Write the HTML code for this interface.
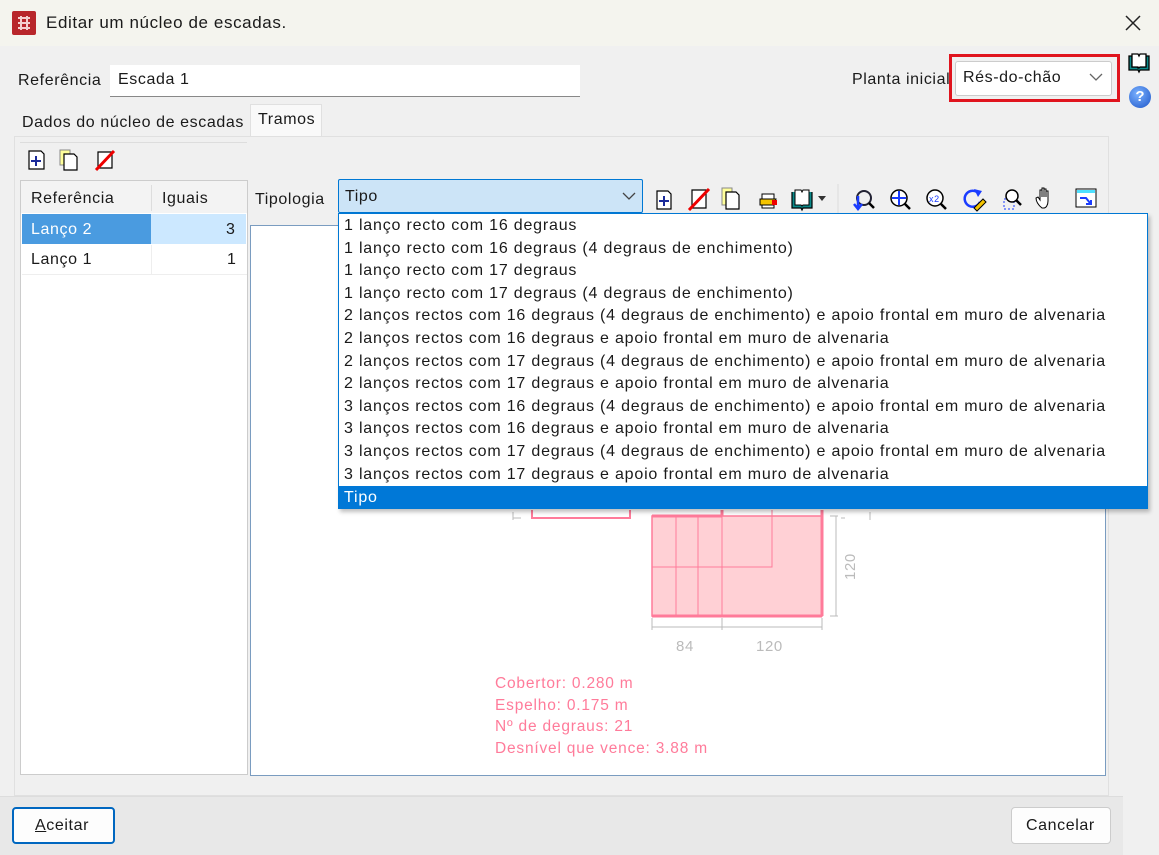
<!DOCTYPE html>
<html><head><meta charset="utf-8"><style>
*{margin:0;padding:0;box-sizing:border-box}
body{width:1159px;height:855px;overflow:hidden;background:#f0f0f0;font-family:"Liberation Sans",sans-serif;font-size:16px;color:#1a1a1a;position:relative;letter-spacing:0.6px}
.a{position:absolute;white-space:nowrap}
.li{position:absolute;left:5px;white-space:nowrap;font-size:16px;letter-spacing:0.8px}
</style></head><body>
<!-- title bar -->
<div class="a" style="left:0;top:0;width:1159px;height:46px;background:#f4f4ee"></div>
<div class="a" style="left:12px;top:11px;width:24px;height:24px;background:#b8262b;border-radius:2px"></div>
<svg class="a" style="left:12px;top:11px" width="24" height="24"><path d="M6 7h12M6 12h12M6 17h12M9 5v14M15 5v14" stroke="#f4d0d0" stroke-width="2" fill="none"/></svg>
<div class="a" style="left:46px;top:13px;font-size:17px">Editar um núcleo de escadas.</div>
<svg class="a" style="left:1124px;top:14px" width="18" height="18"><path d="M2 2L16 16M16 2L2 16" stroke="#222" stroke-width="1.5"/></svg>

<div class="a" style="left:18px;top:72px">Referência</div>
<div class="a" style="left:110px;top:65px;width:470px;height:32px;background:#fff;border-bottom:1px solid #888"></div>
<div class="a" style="left:118px;top:71px">Escada 1</div>

<div class="a" style="left:852px;top:71px">Planta inicial</div>
<div class="a" style="left:949px;top:54px;width:171px;height:48px;border:3px solid #e0141e"></div>
<div class="a" style="left:955px;top:61px;width:157px;height:35px;background:#fff;border:1px solid #ccc;border-radius:3px"></div>
<div class="a" style="left:963px;top:69px">Rés-do-chão</div>
<svg class="a" style="left:1089px;top:72px" width="14" height="10"><path d="M1 2l6 6 6-6" stroke="#666" fill="none" stroke-width="1.3"/></svg>
<svg class="a" style="left:1127px;top:52px" width="24" height="22"><path d="M2 4v14h9l1 2 1-2h9V4h-3v11h-7l-1 1-1-1H5V4z" fill="#0b8a8a" stroke="#000" stroke-width="1.3"/><path d="M5 2h6l1 2 1-2h6v13h-6l-1 1-1-1H5z" fill="#fff" stroke="#000" stroke-width="1.3"/></svg>
<div class="a" style="left:1129px;top:86px;width:22px;height:22px;border-radius:50%;background:radial-gradient(circle at 40% 35%,#7bb2ff,#1d55c8);color:#fff;font-weight:bold;font-size:15px;text-align:center;line-height:22px;letter-spacing:0">?</div>

<!-- tabs -->
<div class="a" style="left:22px;top:114px">Dados do núcleo de escadas</div>
<div class="a" style="left:250px;top:104px;width:72px;height:33px;background:#f9f9f9;border:1px solid #e0e0e0;border-bottom:none"></div>
<div class="a" style="left:258px;top:111px">Tramos</div>
<div class="a" style="left:14px;top:136px;width:1095px;height:660px;border:1px solid #e0e0e0;background:#f0f0f0"></div>
<div class="a" style="left:20px;top:142px;width:227px;height:1px;background:#ddd"></div>

<!-- left toolbar -->
<svg class="a" style="left:26px;top:148px" width="90" height="24">
<path d="M3 3h12l3 3v15H3z" fill="#fff" stroke="#000" stroke-width="1.2"/><path d="M10 8v10M5 13h10" stroke="#1a2a9a" stroke-width="2"/>
<path d="M34 2h10v15H34z" fill="#ffff9a" stroke="#888"/><path d="M38 6h10l3 3v13H38z" fill="#fff" stroke="#000" stroke-width="1.2"/>
<path d="M72 4h14v16H72z" fill="#fff" stroke="#000" stroke-width="1.2"/><path d="M70 22L88 3" stroke="#e00" stroke-width="3"/>
</svg>

<!-- table -->
<div class="a" style="left:20px;top:180px;width:228px;height:595px;background:#fff;border:1px solid #ccc"></div>
<div class="a" style="left:21px;top:181px;width:226px;height:32px;background:#f3f3f3"></div>
<div class="a" style="left:151px;top:185px;width:1px;height:26px;background:#ddd"></div>
<div class="a" style="left:31px;top:190px">Referência</div>
<div class="a" style="left:162px;top:190px">Iguais</div>
<div class="a" style="left:22px;top:214px;width:129px;height:30px;background:#4a9be0"></div>
<div class="a" style="left:151px;top:214px;width:95px;height:30px;background:#cce8ff"></div>
<div class="a" style="left:31px;top:221px;color:#fff">Lanço 2</div>
<div class="a" style="left:226px;top:221px">3</div>
<div class="a" style="left:22px;top:244px;width:225px;height:31px;border-bottom:1px solid #eee"></div>
<div class="a" style="left:151px;top:245px;width:1px;height:29px;background:#eee"></div>
<div class="a" style="left:31px;top:251px">Lanço 1</div>
<div class="a" style="left:227px;top:251px">1</div>

<!-- tipologia -->
<div class="a" style="left:255px;top:191px">Tipologia</div>
<div class="a" style="left:338px;top:179px;width:305px;height:34px;background:#cce4f7;border:1px solid #0078d4;border-radius:2px"></div>
<div class="a" style="left:345px;top:188px">Tipo</div>
<svg class="a" style="left:622px;top:191px" width="14" height="10"><path d="M1 2l6 6 6-6" stroke="#444" fill="none" stroke-width="1.3"/></svg>

<!-- main toolbar -->
<svg class="a" style="left:652px;top:184px" width="455" height="30">
<path d="M5 7h11l3 3v15H5z" fill="#fff" stroke="#000" stroke-width="1.2"/><path d="M12 12v10M7 17h10" stroke="#1a2a9a" stroke-width="2"/>
<path d="M40 6h14v18H40z" fill="#fff" stroke="#000" stroke-width="1.2"/><path d="M37 26L57 5" stroke="#e00" stroke-width="3"/>
<path d="M70 4h10v17H70z" fill="#ffff9a" stroke="#888"/><path d="M74 8h10l3 3v14H74z" fill="#fff" stroke="#000" stroke-width="1.2"/>
<path d="M110 10h12v14h-12z" fill="#fff" stroke="#000"/><path d="M108 15h16l-2 6h-14z" fill="#f4c400" stroke="#000"/><path d="M120 16h5v5h-5z" fill="#e00"/>
<path d="M140 8v16h9l1 2 1-2h9V8" fill="#0b8a8a" stroke="#000" stroke-width="1.2"/><path d="M143 6h6l1 2 1-2h6v15h-6l-1 1-1-1h-6z" fill="#fff" stroke="#000"/><path d="M166 12h8l-4 5z" fill="#333"/>
<line x1="186" y1="0" x2="186" y2="30" stroke="#ddd"/>
<circle cx="212" cy="14" r="7" fill="none" stroke="#223" stroke-width="2"/><path d="M217 19l5 5" stroke="#000" stroke-width="2.5"/><path d="M206 12v12M202 20l4 5 4-5" stroke="#1a3cff" stroke-width="2.5" fill="none"/>
<circle cx="247" cy="14" r="8" fill="#fff" stroke="#000" stroke-width="1.5"/><path d="M247 7v14M240 14h14" stroke="#1a3cff" stroke-width="2"/><path d="M253 20l5 5" stroke="#000" stroke-width="2.5"/>
<circle cx="283" cy="14" r="8" fill="#fff" stroke="#000" stroke-width="1.5"/><text x="277" y="18" font-size="9" fill="#1a3cff" font-family="Liberation Sans">x2</text><path d="M289 20l5 5" stroke="#000" stroke-width="2.5"/>
<path d="M325 8a8 8 0 1 0 3 10" stroke="#1a3cff" stroke-width="2.5" fill="none"/><path d="M322 5l8 2-4 6z" fill="#1a3cff"/><path d="M322 24l9-9 3 3-9 9z" fill="#f4c400" stroke="#000"/>
<rect x="352" y="15" width="10" height="10" fill="none" stroke="#1a3cff" stroke-dasharray="2 2"/><circle cx="360" cy="12" r="6" fill="#fff" stroke="#000" stroke-width="1.5"/><path d="M364 16l5 5" stroke="#000" stroke-width="2.5"/>
<path d="M390 24c-4-3-6-7-6-10l2-1 2 3V6h2v7V4h2v9V5h2v8V7h2v10c0 4-2 7-4 7z" fill="#fff" stroke="#000"/>
<rect x="424" y="5" width="20" height="18" fill="#fff" stroke="#000"/><rect x="425" y="6" width="18" height="3" fill="#4fe0ff"/><path d="M428 14l6 0 4 5M434 20l5 0 0-4" stroke="#1a3cff" stroke-width="2" fill="none"/>
</svg>

<!-- drawing area -->
<div class="a" style="left:250px;top:225px;width:856px;height:551px;background:#fff;border:1px solid #7a9cc0"></div>
<svg class="a" style="left:250px;top:500px" width="856" height="160">
<path d="M282 10v8h98v-8" stroke="#ff7b9a" stroke-width="2" fill="none"/>
<path d="M263 18h8M263 12v8M595 18h-4M620 12v8" stroke="#bbb" fill="none"/>
<rect x="402" y="16" width="170" height="100" fill="#ffd0d5" stroke="#ff7b9a" stroke-width="1.5"/>
<path d="M402 16h70M472 10v6M572 10v106M402 116h170" stroke="#ff7b9a" stroke-width="3" fill="none"/>
<path d="M426 16v100M448 16v100M472 16v100M402 67h120V10" stroke="#ff7b9a" stroke-width="1" fill="none"/>
<path d="M580 16h8M580 116h8M586 16v100M402 118v12M472 118v12M572 118v12M402 127h170" stroke="#bbb" stroke-width="1" fill="none"/>
<text x="426" y="151" font-size="15" fill="#bbb" font-family="Liberation Sans">84</text>
<text x="506" y="151" font-size="15" fill="#bbb" font-family="Liberation Sans">120</text>
<text x="605" y="80" font-size="15" fill="#bbb" font-family="Liberation Sans" transform="rotate(-90 605 80)">120</text>
</svg>
<div class="a" style="left:495px;top:673px;color:#ff7b9a;font-size:15.5px;line-height:21.5px;letter-spacing:0.8px">Cobertor: 0.280 m<br>Espelho: 0.175 m<br>Nº de degraus: 21<br>Desnível que vence: 3.88 m</div>

<!-- dropdown -->
<div class="a" style="left:338px;top:213px;width:810px;height:296px;background:#fff;border:1px solid #0078d4;box-shadow:2px 3px 4px rgba(0,0,0,.25);overflow:hidden">
<div class="li" style="top:3px">1 lanço recto com 16 degraus</div>
<div class="li" style="top:25.6px">1 lanço recto com 16 degraus (4 degraus de enchimento)</div>
<div class="li" style="top:48.2px">1 lanço recto com 17 degraus</div>
<div class="li" style="top:70.8px">1 lanço recto com 17 degraus (4 degraus de enchimento)</div>
<div class="li" style="top:93.4px">2 lanços rectos com 16 degraus (4 degraus de enchimento) e apoio frontal em muro de alvenaria</div>
<div class="li" style="top:116px">2 lanços rectos com 16 degraus e apoio frontal em muro de alvenaria</div>
<div class="li" style="top:138.6px">2 lanços rectos com 17 degraus (4 degraus de enchimento) e apoio frontal em muro de alvenaria</div>
<div class="li" style="top:161.2px">2 lanços rectos com 17 degraus e apoio frontal em muro de alvenaria</div>
<div class="li" style="top:183.8px">3 lanços rectos com 16 degraus (4 degraus de enchimento) e apoio frontal em muro de alvenaria</div>
<div class="li" style="top:206.4px">3 lanços rectos com 16 degraus e apoio frontal em muro de alvenaria</div>
<div class="li" style="top:229px">3 lanços rectos com 17 degraus (4 degraus de enchimento) e apoio frontal em muro de alvenaria</div>
<div class="li" style="top:251.6px">3 lanços rectos com 17 degraus e apoio frontal em muro de alvenaria</div>
<div class="a" style="left:0;top:272px;width:810px;height:24px;background:#0078d7"></div>
<div class="li" style="top:275px;color:#fff">Tipo</div>
</div>

<!-- bottom -->
<div class="a" style="left:0;top:796px;width:1123px;height:59px;background:#e8e8e8;border-top:1px solid #ddd"></div>
<div class="a" style="left:12px;top:807px;width:103px;height:37px;background:#fdfdfd;border:2px solid #0067c0;border-radius:4px"></div>
<div class="a" style="left:35px;top:817px"><u>A</u>ceitar</div>
<div class="a" style="left:1011px;top:807px;width:100px;height:37px;background:#fdfdfd;border:1px solid #ccc;border-radius:4px"></div>
<div class="a" style="left:1026px;top:817px">Cancelar</div>
</body></html>
